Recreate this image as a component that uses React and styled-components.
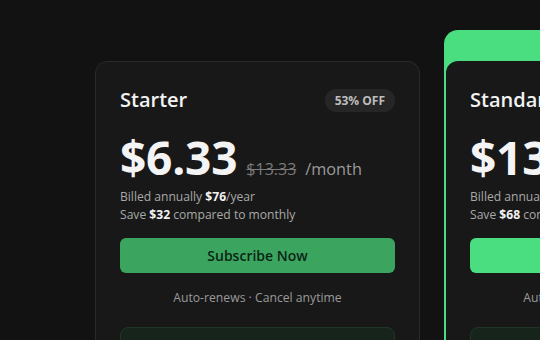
import React from "react";
import styled, { createGlobalStyle } from "styled-components";

const Global = createGlobalStyle`
  html, body { margin: 0; padding: 0; background: #121212; overflow: hidden; }
  body { font-family: "Open Sans", "Noto Sans", sans-serif; color: #f2f2f2; }
`;

const Page = styled.div`
  width: 540px;
  height: 340px;
  overflow: hidden;
  background: #121212;
`;

const Row = styled.div`
  display: flex;
  align-items: flex-start;
  gap: 24px;
  padding: 61px 0 0 95px;
`;

const Card = styled.div`
  flex: 0 0 auto;
  box-sizing: border-box;
  width: 325px;
  background: #181818;
  border: 1px solid #2a2a2a;
  border-radius: 12px;
  padding: 24px;
`;

const Featured = styled.div`
  flex: 0 0 auto;
  box-sizing: border-box;
  width: 327px;
  margin-top: -31px;
  background: #4ade80;
  border-radius: 14px;
  padding: 0 2px 2px;
  display: flex;
  flex-direction: column;
`;

const Ribbon = styled.div`
  height: 31px;
  display: flex;
  align-items: center;
  justify-content: center;
  font-size: 12px;
  font-weight: 700;
  letter-spacing: 0.06em;
  text-transform: uppercase;
  color: #0b2514;
`;

const Inner = styled.div`
  background: #181818;
  border-radius: 12px;
  padding: 25px 24px 24px;
`;

const Head = styled.div`
  display: flex;
  align-items: center;
  justify-content: space-between;
  height: 28px;
`;

const Title = styled.h2`
  margin: 0;
  font-size: 20px;
  line-height: 28px;
  font-weight: 600;
  color: #f2f2f2;
`;

const Badge = styled.span`
  display: inline-flex;
  align-items: center;
  height: 23px;
  padding: 0 10px;
  border-radius: 999px;
  background: #262626;
  color: #bdbdbd;
  font-size: 12px;
  font-weight: 700;
`;

const PriceRow = styled.div`
  display: flex;
  align-items: baseline;
  gap: 9px;
  margin-top: 20px;
  height: 46px;
  white-space: nowrap;
`;

const Price = styled.span`
  font-size: 46px;
  line-height: 46px;
  font-weight: 700;
  color: #f4f4f4;
  letter-spacing: -0.2px;
`;

const Old = styled.span`
  font-size: 16px;
  color: #7a7a7a;
  text-decoration: line-through;
`;

const Per = styled.span`
  font-size: 16.3px;
  color: #9a9a9a;
`;

const Note = styled.p`
  margin: ${(p) => (p.$first ? "8px" : "0")} 0 0;
  font-size: 12.1px;
  line-height: 18px;
  color: #a8a8a8;
  white-space: nowrap;
  b { color: #f2f2f2; font-weight: 700; }
`;

const Button = styled.button`
  display: flex;
  align-items: center;
  justify-content: center;
  width: 100%;
  height: 35px;
  margin-top: 14px;
  border: none;
  border-radius: 6px;
  background: ${(p) => (p.$bright ? "#4ade80" : "#3ba55f")};
  color: #0b2514;
  font-family: inherit;
  font-size: 14px;
  font-weight: 600;
  cursor: pointer;
`;

const Fine = styled.p`
  margin: 16px 0 0;
  text-align: center;
  font-size: 12.2px;
  line-height: 18px;
  color: #9a9a9a;
  white-space: nowrap;
`;

const Perks = styled.div`
  margin-top: 20px;
  height: 80px;
  border-radius: 8px;
  background: #17241b;
  border: 1px solid #1f3627;
`;

function Body({ name, badge, price, old, billed, save, bright }) {
  return (
    <>
      <Head>
        <Title>{name}</Title>
        <Badge>{badge}</Badge>
      </Head>
      <PriceRow>
        <Price>{price}</Price>
        <Old>{old}</Old>
        <Per>/month</Per>
      </PriceRow>
      <Note $first>
        Billed annually <b>{billed}</b>/year
      </Note>
      <Note>
        Save <b>{save}</b> compared to monthly
      </Note>
      <Button $bright={bright}>Subscribe Now</Button>
      <Fine>Auto-renews · Cancel anytime</Fine>
      <Perks />
    </>
  );
}

export default function App() {
  return (
    <Page>
      <Global />
      <Row>
        <Card>
          <Body name="Starter" badge="53% OFF" price="$6.33" old="$13.33" billed="$76" save="$32" />
        </Card>
        <Featured>
          <Ribbon>Most Popular</Ribbon>
          <Inner>
            <Body name="Standard" badge="50% OFF" price="$13.33" old="$19.00" billed="$160" save="$68" bright />
          </Inner>
        </Featured>
      </Row>
    </Page>
  );
}
